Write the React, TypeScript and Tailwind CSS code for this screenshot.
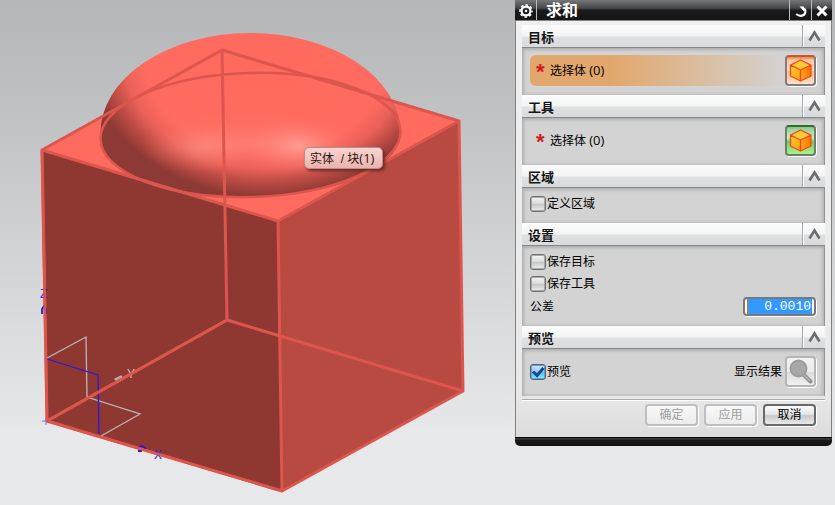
import React, { useState } from "react";

function Scene() {
  return (
    <svg width="515" height="505" viewBox="0 0 515 505" className="block max-w-none" role="img" aria-label="3D model">
      <defs>
        <radialGradient id="dome" gradientUnits="userSpaceOnUse" cx="0" cy="0" r="1" gradientTransform="translate(266 56) scale(180 143)">
          <stop offset="0" stopColor="#ff6a5e" />
          <stop offset="0.68" stopColor="#ff6b60" />
          <stop offset="0.79" stopColor="#ea6158" />
          <stop offset="0.89" stopColor="#b84a43" />
          <stop offset="0.98" stopColor="#8e3a34" />
        </radialGradient>
        <radialGradient id="glow">
          <stop offset="0" stopColor="#ffa89c" stopOpacity="0.85" />
          <stop offset="0.5" stopColor="#ff8d82" stopOpacity="0.4" />
          <stop offset="1" stopColor="#ff6b60" stopOpacity="0" />
        </radialGradient>
      </defs>
      <path d="M42 150 222 50 459 121 278 221Z" fill="#ff6b5f" />
      <path d="M42 150 278 221 282 491 47 421Z" fill="#8f3832" />
      <path d="M278 221 459 121 463 391 282 491Z" fill="#b84a42" />
      <path d="M100.500 139V134A150 100 0 0 1 400.500 132C401 168 334 196 252 197C168 198 102 172 100.500 139Z" fill="url(#dome)" />
      <ellipse cx="204" cy="147" rx="62" ry="27" fill="url(#glow)" opacity="0.5" />
      <ellipse cx="298" cy="146" rx="58" ry="30" fill="url(#glow)" />
      <ellipse cx="250" cy="142" rx="110" ry="34" fill="url(#glow)" opacity="0.3" />
      <g fill="none" stroke="#dc564d" strokeWidth="3" strokeLinejoin="round" strokeLinecap="round">
        <ellipse cx="250.500" cy="135" rx="150" ry="62" transform="rotate(-1.6 250.500 135)" strokeWidth="2.500" />
        <path d="M42 150 222 50 459 121 278 221ZM42 150 47 421 282 491 463 391 459 121M278 221 282 491M222 50 227 320 47 421M227 320 463 391" />
      </g>
      <g fill="none" stroke="#bdb7b5" strokeWidth="1.300">
        <path d="M47 358 86 337 87 397 140 414 101 436" />
        <path d="M115 379 121 376 123 379 118 382Z" fill="#a9a09c" />
      </g>
      <g fill="none" stroke="#2c18dc" strokeWidth="1.300">
        <path d="M47 359 98 375 99 434" />
        <path d="M42 421H50M46 418V425" stroke="#7770ee" strokeWidth="1" />
        <path d="M42 314V309L44 306L46 309V314M139 447 142 446 146 449M138 451H142" strokeWidth="1.800" />
      </g>
      <g className="font-['Liberation_Sans',sans-serif] text-[12px]">
        <text x="40" y="298" fill="#3b2de2">Z</text>
        <text x="127" y="378" fill="#d4c5c1">Y</text>
        <text x="154" y="459" fill="#2a18ea">X</text>
      </g>
      <path d="M47 421 227 320M42 150 47 421 282 491" stroke="#dc564d" strokeWidth="2.600" fill="none" />
    </svg>
  );
}

function CubeIcon() {
  return (
    <svg width="25" height="25" viewBox="0 0 25 25" className="shrink-0" aria-hidden="true">
      <defs>
        <linearGradient id="cubeL" x1="0" y1="0" x2="1" y2="1"><stop offset="0" stopColor="#ffd62c" /><stop offset="1" stopColor="#ff981c" /></linearGradient>
        <linearGradient id="cubeR" x1="0" y1="0" x2="1" y2="0"><stop offset="0" stopColor="#ffa614" /><stop offset="1" stopColor="#ff7300" /></linearGradient>
      </defs>
      <path d="M12.500 2 23 7.200 12.500 12 2.500 7.200Z" fill="#ffcb36" />
      <path d="M2.500 7.200 12.500 12V23L2.500 18Z" fill="url(#cubeL)" />
      <path d="M23 7.200 12.500 12V23L23 18Z" fill="url(#cubeR)" />
      <path d="M12.500 2 23 7.200V18L12.500 23 2.500 18V7.200ZM2.500 7.200 12.500 12 23 7.200M12.500 12V23" fill="none" stroke="#f04a1c" strokeWidth="1.300" strokeLinejoin="round" />
    </svg>
  );
}

function Section({ title, children }: { title: string; children: React.ReactNode }) {
  return (
    <section>
      <header className="flex h-[23px] items-stretch border-b border-[#85878a] bg-[linear-gradient(#fcfcfc_0%,#f3f4f4_50%,#e0e1e2_54%,#d9dadb_100%)]">
        <h2 className="flex-1 pl-[6px] text-[13px] leading-[24px] font-bold text-[#151515]">{title}</h2>
        <button type="button" aria-label={"收起" + title} className="flex w-[23px] items-center justify-center border-l border-[#a5a6a8] shadow-[inset_1px_0_0_#fff]">
          <svg width="13" height="12" viewBox="0 0 13 12" aria-hidden="true">
            <path d="M1.500 10.500 6.500 2.500 11.500 10.500" fill="none" stroke="#6b6c6e" strokeWidth="2.600" />
          </svg>
        </button>
      </header>
      <div className="border-r border-[#939393] bg-[#d3d3d3] px-[8px] shadow-[inset_3px_3px_3px_-1px_#b0b0b0,inset_-2px_-1px_3px_#b8b8b8]">
        {children}
      </div>
    </section>
  );
}

function SelectRow({ active }: { active?: boolean }) {
  return (
    <div className="pt-[7px] pb-[9px]">
      <div className={"flex h-[31px] items-center rounded-[6px] " + (active ? "bg-[linear-gradient(90deg,#e2a76c_0%,#e2a76c_28%,#d3d3d3_90%)]" : "")}>
        <span className="w-[20px] pt-[2px] pl-[6px] text-[22px] leading-[24px] font-bold text-[#d41c1c] font-['Liberation_Sans',sans-serif]">*</span>
        <span className="flex-1 text-[12px] leading-[16px]">选择体 <span className="text-[13px]">(0)</span></span>
        <button
          type="button"
          aria-label="选择体"
          className={
            "flex size-[31px] items-center justify-center rounded-[4px] border-2 shadow-[1px_1px_0_#fff] " +
            (active
              ? "border-[#857c76] border-t-[#b5603a] bg-[linear-gradient(#ff7b2e_0%,#fcc7a6_12%,#fbd9c5_50%,#fdb68a_54%,#ffe2d0_100%)]"
              : "border-[#6c8068] border-t-[#2c6e2c] bg-[linear-gradient(#8ec98a_0%,#d2ecd0_40%,#79c86c_54%,#a9f28d_100%)]")
          }
        >
          <CubeIcon />
        </button>
      </div>
    </div>
  );
}

function Check({ label, initial }: { label: string; initial?: boolean }) {
  const [on, setOn] = useState(!!initial);
  return (
    <label className="flex h-[16px] items-center gap-px text-[12px] leading-[16px]">
      <span className="relative flex size-[16px]">
        <input
          type="checkbox"
          checked={on}
          onChange={(e) => setOn(e.target.checked)}
          className="size-[16px] appearance-none rounded-[3px] border border-[#707173] bg-[linear-gradient(#f4f4f4_0%,#dedede_45%,#c5c6c7_52%,#eeeeee_100%)] shadow-[inset_0_0_0_1px_#a9aaab] checked:border-[#4a6482] checked:bg-[linear-gradient(#d5e7f8_0%,#9fcdf2_45%,#55c5f0_55%,#7cf0ff_100%)] checked:shadow-[inset_0_0_0_1px_#6f9cc4]"
        />
        {on && (
          <svg width="16" height="16" viewBox="0 0 16 16" className="pointer-events-none absolute inset-0" aria-hidden="true">
            <path d="M3 7.500 7 11.500 13.500 4" fill="none" stroke="#144a94" strokeWidth="3" />
          </svg>
        )}
      </span>
      {label}
    </label>
  );
}

const disabledButton = "h-[22px] w-[53px] rounded-[4px] border-2 border-[#bebfc0] bg-[linear-gradient(#f8f8f8,#ececec)] text-[12px] leading-[18px] text-[#a0a0a0] shadow-[1px_1px_0_#fff]";

export default function App() {
  const [tolerance, setTolerance] = useState("0.0010");
  return (
    <div className="flex min-h-screen items-start overflow-hidden bg-[linear-gradient(#b5b6b8_0%,#bfc0c2_20%,#d0d1d2_47%,#e6e8e9_86%)] text-black font-['Open_Sans','Noto_Sans_CJK_SC',sans-serif]">
      <main className="relative min-w-0 flex-1 overflow-hidden">
        <Scene />
        <div role="tooltip" className="absolute top-[147px] left-[304px] h-[22px] w-[79px] rounded-[5px] border border-[#b98d89] bg-[linear-gradient(#fad4d0,#e9b3ae)] pl-[5px] text-[12px] leading-[20px] whitespace-nowrap text-[#2e1210] shadow-[2px_2px_3px_#6b2a26] font-['Liberation_Sans','Noto_Sans_CJK_SC',sans-serif]">
          实体&nbsp; / 块<span className="text-[13px] font-['Open_Sans',sans-serif]">(1)</span>
        </div>
      </main>

      <div role="dialog" aria-label="求和" className="mr-[3px] w-[317px] shrink-0">
        <div className="flex h-[20px] items-stretch bg-[linear-gradient(#747678_0%,#47484a_40%,#1a1a1b_52%,#151516_100%)] text-white">
          <button type="button" aria-label="选项" className="flex w-[22px] items-center justify-center border-r border-[#b9babb]">
            <svg width="14" height="14" viewBox="0 0 14 14" className="mt-[2px]" aria-hidden="true">
              <circle cx="7" cy="7" r="4.400" fill="none" stroke="white" strokeWidth="2.200" />
              <circle cx="7" cy="7" r="6" fill="none" stroke="white" strokeWidth="1.600" strokeDasharray="2.600 2.112" strokeDashoffset="1.300" />
              <circle cx="7" cy="7" r="1.300" fill="white" />
            </svg>
          </button>
          <h1 className="flex-1 pl-[9px] text-[16px] leading-[20px] font-bold">求和</h1>
          <button type="button" aria-label="重置" className="flex w-[22px] items-center justify-center border-l border-[#b9babb]">
            <svg width="12" height="12" viewBox="0 0 12 12" className="mt-[3px]" aria-hidden="true">
              <path d="M7 2C10 2.500 10.800 4.500 10.300 6.500C9.500 10 5 11 1.200 8" fill="none" stroke="white" strokeWidth="2.200" />
              <path d="M4.500 0.500H9V5.500Z" fill="white" />
            </svg>
          </button>
          <button type="button" aria-label="关闭" className="flex w-[21px] items-center justify-center border-l border-[#b9babb]">
            <svg width="12" height="12" viewBox="0 0 12 12" className="mt-[2px]" aria-hidden="true">
              <path d="M1.500 1.500 10.500 10.500M10.500 1.500 1.500 10.500" stroke="white" strokeWidth="3" />
            </svg>
          </button>
        </div>

        <div className="border-x border-t border-[#7e8082] bg-[linear-gradient(#f0f0f0,#e8e8e8_90%,#dcdcdc)] px-[6px] pt-[4px] pb-[11px]">
          <Section title="目标"><SelectRow active /></Section>
          <Section title="工具"><SelectRow /></Section>
          <Section title="区域">
            <div className="pt-[8px] pb-[11px]"><Check label="定义区域" /></div>
          </Section>
          <Section title="设置">
            <div className="pt-[8px] pb-[10px]">
              <div className="flex flex-col gap-[6px]">
                <Check label="保存目标" />
                <Check label="保存工具" />
              </div>
              <div className="mt-[5px] flex h-[19px] items-center justify-between">
                <label htmlFor="tolerance" className="text-[12px] leading-[16px]">公差</label>
                <div className="flex h-[19px] w-[73px] rounded-[4px] border-2 border-[#77797b] bg-white px-[2px] shadow-[1px_1px_0_#fff]">
                  <input
                    id="tolerance"
                    value={tolerance}
                    onChange={(e) => setTolerance(e.target.value)}
                    className="h-[15px] w-full min-w-0 border-l border-[#d9731a] bg-[#3399ff] pr-px text-right text-[13px] leading-[15px] text-white outline-none font-['Liberation_Mono',monospace]"
                  />
                </div>
              </div>
            </div>
          </Section>
          <Section title="预览">
            <div className="flex items-center justify-between pt-[7px] pb-[9px]">
              <Check label="预览" initial />
              <div className="flex items-center gap-[3px] text-[12px] leading-[16px]">
                <span>显示结果</span>
                <button type="button" aria-label="显示结果" className="flex size-[31px] items-center justify-center rounded-[4px] border-2 border-[#b4b5b6] bg-[linear-gradient(#f3f3f3_0%,#ececec_50%,#dcdcdc_54%,#f2f2f2_100%)] shadow-[1px_1px_0_#fff]">
                  <svg width="25" height="25" viewBox="0 0 25 25" className="shrink-0" aria-hidden="true">
                    <path d="M15.500 15.500 22.500 22.500" stroke="#8c8c8c" strokeWidth="4" strokeLinecap="round" />
                    <path d="M16 16 22 22" stroke="#b4b4b4" strokeWidth="2" />
                    <circle cx="10.500" cy="9.500" r="8" fill="#a8a8a8" stroke="#9c9c9c" strokeWidth="2" />
                  </svg>
                </button>
              </div>
            </div>
          </Section>
          <div className="mt-[3px] h-[2px] border-b border-white bg-[#aaaaaa]" />
          <div className="mt-[3px] flex justify-end gap-[6px] pr-[9px]">
            <button type="button" disabled className={disabledButton}>确定</button>
            <button type="button" disabled className={disabledButton}>应用</button>
            <button type="button" className="h-[22px] w-[53px] rounded-[4px] border-2 border-[#66686a] bg-[linear-gradient(#fafafa_0%,#e6e7e7_45%,#c9cacb_54%,#e9e9e9_100%)] text-[12px] leading-[18px] shadow-[1px_1px_0_#fff]">取消</button>
          </div>
        </div>
        <div className="h-[9px] rounded-b-[5px] border-t border-black bg-[linear-gradient(#454545,#1a1a1b_30%,#111111)]" />
      </div>
    </div>
  );
}
